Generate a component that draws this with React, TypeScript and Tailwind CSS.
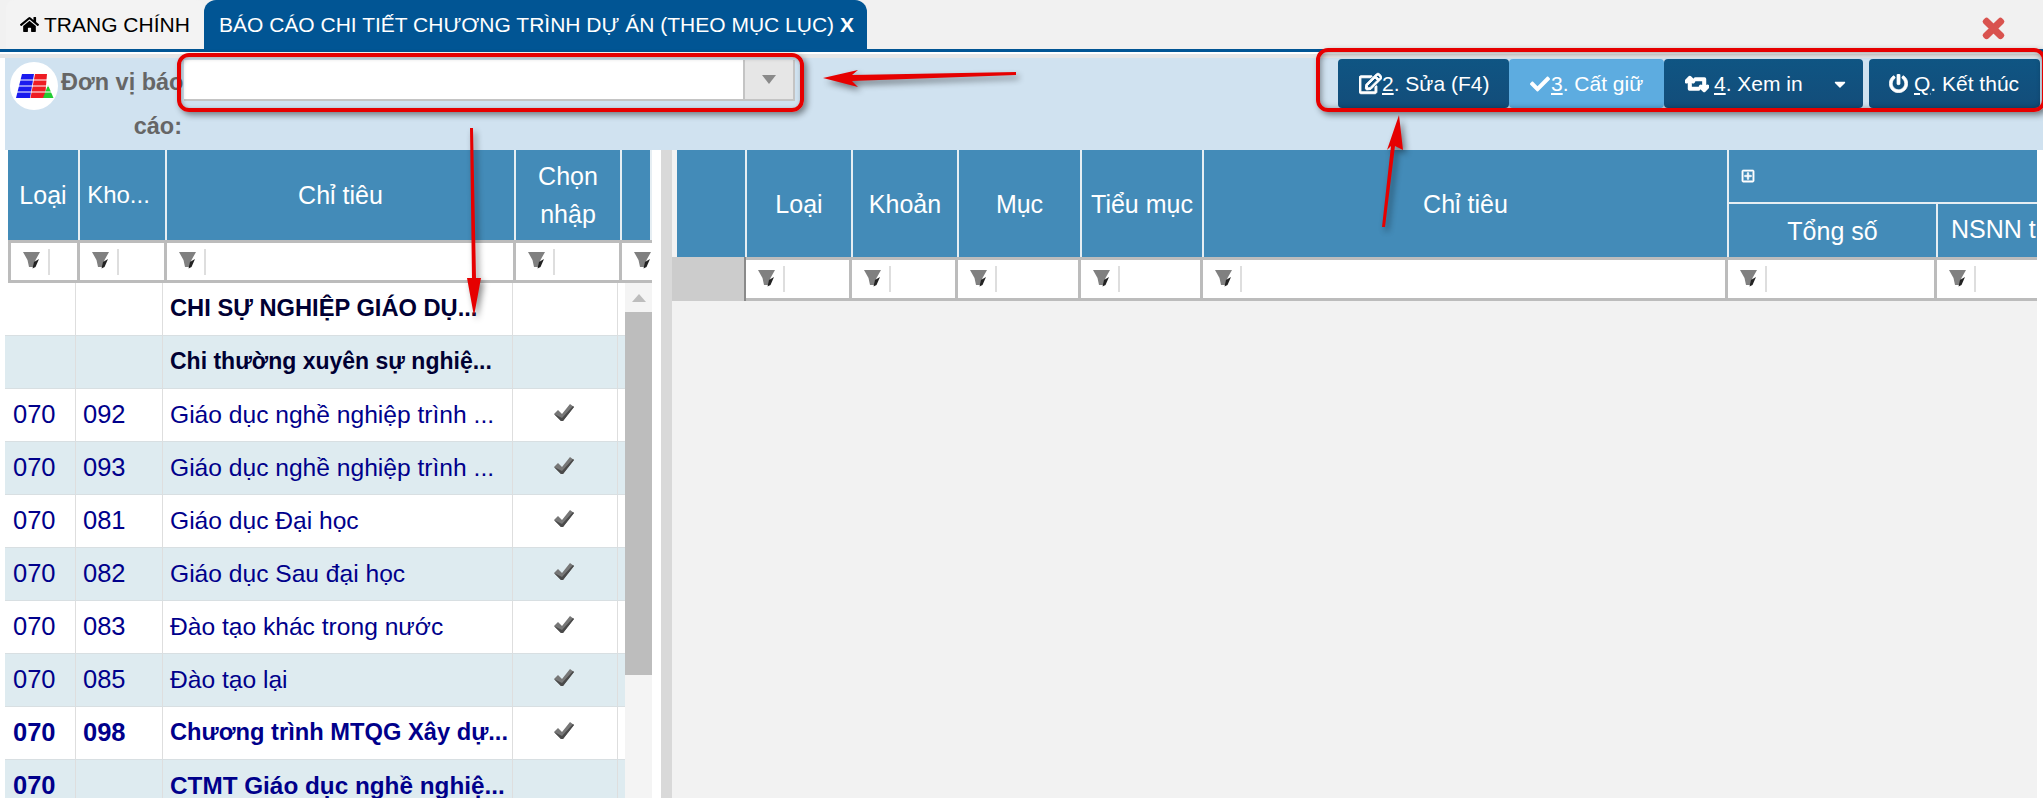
import React from "react";
import { FaHome, FaRegEdit, FaCheck, FaRetweet, FaPowerOff, FaTimes, FaRegPlusSquare, FaCaretDown } from "react-icons/fa";

function Funnel() {
  return (
    <svg width="17" height="18" viewBox="0 0 17 18" className="shrink-0 -mt-[3px]">
      <path d="M0 1 H17 L12.5 9 L11 16 H6 L4.5 9 Z" fill="#808080" />
      <path d="M11 11 L16 8 L12.5 16 L9.5 17.5 Z" fill="#222" />
    </svg>
  );
}

function FilterCell({ w, last }: { w: number; last?: boolean }) {
  return (
    <div style={{ width: w }} className={`h-full shrink-0 bg-white flex items-center pl-[12px] gap-[8px] ${last ? "" : "border-r-[3px] border-[#bcbcbc]"}`}>
      <Funnel />
      <div className="w-[2px] h-[26px] bg-[#dedede]" />
    </div>
  );
}

function Check() {
  return (
    <svg width="22" height="20" viewBox="0 0 22 20">
      <path d="M1 11 L5 7 L9 11 L17 1 L21 4 L10 18 L8 18 Z" fill="#777" />
      <path d="M1 11 L8 18 L10 18 L21 4 L20 3 L9 15 Z" fill="#4a4a4a" />
    </svg>
  );
}

function Logo() {
  return (
    <svg width="48" height="48" viewBox="0 0 48 48" className="shrink-0">
      <circle cx="24" cy="24" r="24" fill="#fff" />
      <path d="M12 12 H24 L20 36 H6 Z" fill="#1a1aee" />
      <path d="M25 12 H37 L35 36 H20.5 Z" fill="#ee1c24" />
      <path d="M38 23 L43.5 36 H33 Z" fill="#22cc33" />
      <path d="M4 18 H40 M4 24 H40 M4 30 H46" stroke="#fff" strokeWidth="1.2" />
    </svg>
  );
}

const rows = [
  { a: "", b: "", c: "CHI SỰ NGHIỆP GIÁO DỤ...", size: "text-[23.7px]", bold: true, dark: true, check: false },
  { a: "", b: "", c: "Chi thường xuyên sự nghiệ...", size: "text-[23px]", bold: true, dark: true, check: false },
  { a: "070", b: "092", c: "Giáo dục nghề nghiệp trình ...", size: "text-[24.6px]", check: true },
  { a: "070", b: "093", c: "Giáo dục nghề nghiệp trình ...", size: "text-[24.6px]", check: true },
  { a: "070", b: "081", c: "Giáo dục Đại học", size: "text-[24.6px]", check: true },
  { a: "070", b: "082", c: "Giáo dục Sau đại học", size: "text-[24.6px]", check: true },
  { a: "070", b: "083", c: "Đào tạo khác trong nước", size: "text-[24.6px]", check: true },
  { a: "070", b: "085", c: "Đào tạo lại", size: "text-[24.6px]", check: true },
  { a: "070", b: "098", c: "Chương trình MTQG Xây dự...", size: "text-[23.7px]", bold: true, check: true },
  { a: "070", b: "", c: "CTMT Giáo dục nghề nghiệ...", size: "text-[24.3px]", bold: true, check: false },
];

const headL = "flex items-center justify-center text-white text-[25px] leading-[38px] bg-[#438bb8] border-r-2 border-[#e6eef3] shrink-0 text-center overflow-hidden";

function Btn({ className, children }: { className: string; children: React.ReactNode }) {
  return (
    <div className={`h-[49px] flex items-center text-white text-[21px] rounded-[4px] ${className}`}>{children}</div>
  );
}

export default function App() {
  return (
    <div className="relative w-[2043px] h-[798px] overflow-hidden bg-[#f1f1f1] font-['Liberation_Sans',Arial,sans-serif]">
      {/* tabs */}
      <div className="flex h-[49px] pl-[6px] items-stretch">
        <div className="w-[198px] bg-[#f3f3f3] rounded-t-lg flex items-center pl-[14px] gap-[5px] text-[21px] text-black">
          <FaHome className="text-[19px]" />
          <span>TRANG CHÍNH</span>
        </div>
        <div className="w-[663px] bg-[#015594] rounded-t-xl flex items-center pl-[15px] text-[21px] text-white whitespace-nowrap">
          BÁO CÁO CHI TIẾT CHƯƠNG TRÌNH DỰ ÁN (THEO MỤC LỤC)<span className="ml-[6px] font-bold">X</span>
        </div>
        <div className="flex-1 flex items-center justify-end pr-[35px] pt-[7px]">
          <FaTimes className="text-[#d9534f] text-[29px] [stroke-width:30px]" />
        </div>
      </div>
      <div className="h-[3px] bg-[#015594]" />
      <div className="h-[2px] bg-white" />
      <div className="h-[4px] bg-[#e6e6e6]" />

      <div className="pl-[5px] bg-white">
        {/* toolbar */}
        <div className="h-[92px] bg-[#d0e2f0] flex items-start pl-[5px] pr-[3px]">
          <div className="mt-[4px]"><Logo /></div>
          <div className="w-[121px] ml-[3px] mt-[2px] text-right font-bold text-[23.5px] leading-[44px] text-[#666] whitespace-pre">
            {"Đơn vị báo\ncáo:"}
          </div>
          <div className="relative ml-[2px] mt-[2px] w-[611px] h-[41px] bg-white border-b-2 border-r-2 border-[#c4c4c4] flex justify-end">
            <div className="w-[50px] h-full bg-[#e6e6e6] border-l-2 border-[#c4c4c4] flex items-center justify-center">
              <div className="w-0 h-0 border-l-[7px] border-r-[7px] border-t-[9px] border-l-transparent border-r-transparent border-t-[#8a8a8a]" />
            </div>
          </div>
          <div className="ml-auto mt-[1px] flex items-start">
            <Btn className="w-[171px] bg-[linear-gradient(#0f5583,#134d7a)] pl-[21px]">
              <FaRegEdit className="text-[23px] mr-0 [stroke-width:25px]" />
              <span><u>2</u>. Sửa (F4)</span>
            </Btn>
            <Btn className="w-[155px] bg-[#5dace0] pl-[21px]">
              <FaCheck className="text-[20px]" />
              <span className="ml-[1px]"><u>3</u>. Cất giữ</span>
            </Btn>
            <Btn className="w-[199px] bg-[linear-gradient(#0f5583,#134d7a)] pl-[21px]">
              <FaRetweet className="text-[24px] [stroke-width:45px]" />
              <span className="ml-[5px]"><u>4</u>. Xem in</span>
              <FaCaretDown className="ml-auto mr-[14px] text-[18px]" />
            </Btn>
            <Btn className="w-[171px] ml-[6px] bg-[linear-gradient(#0f5583,#134d7a)] pl-[20px]">
              <FaPowerOff className="text-[19px] mr-[6px] [stroke-width:20px]" />
              <span><u>Q</u>. Kết thúc</span>
            </Btn>
          </div>
        </div>

        {/* panes */}
        <div className="flex h-[648px]">
          {/* left */}
          <div className="w-[647px] shrink-0 overflow-hidden bg-white">
            <div className="pl-[3px] flex h-[90px] pr-0">
              <div style={{ width: 72 }} className={headL}>Loại</div>
              <div style={{ width: 87 }} className={headL + " pr-[8px] !text-[24px]"}>Kho...</div>
              <div style={{ width: 349 }} className={headL}>Chỉ tiêu</div>
              <div style={{ width: 106 }} className={headL}>Chọn<br />nhập</div>
              <div style={{ width: 30 }} className={headL + " border-r-0"} />
            </div>
            <div className="ml-[3px] h-[43px] flex border-t-[3px] border-b-[3px] border-l-[3px] border-[#bcbcbc]">
              <FilterCell w={69} />
              <FilterCell w={87} />
              <FilterCell w={349} />
              <FilterCell w={106} />
              <FilterCell w={30} last />
            </div>
            <div className="flex">
              <div className="w-[620px] shrink-0">
                {rows.map((r, i) => (
                  <div key={i} className={`flex h-[53px] border-b border-[#d8dfe2] ${i % 2 ? "bg-[#deebf0]" : "bg-white"} ${r.bold ? "font-bold" : ""} ${r.dark ? "text-[#000033]" : "text-[#00008b]"}`}>
                    <div className="w-[71px] border-r border-[#dedede] pl-[8px] leading-[51px] text-[25.5px]">{r.a}</div>
                    <div className="w-[87px] border-r border-[#dedede] pl-[7px] leading-[51px] text-[25.5px]">{r.b}</div>
                    <div className={`w-[350px] border-r border-[#dedede] pl-[7px] leading-[51px] whitespace-nowrap overflow-hidden ${r.size}`}>{r.c}</div>
                    <div className="w-[105px] border-r border-[#dedede] flex justify-center pt-[14px] pr-[3px]">{r.check ? <Check /> : null}</div>
                  </div>
                ))}
              </div>
              <div className="w-[27px] ml-0 flex flex-col items-center bg-[#f4f4f4]">
                <div className="h-[29px] flex items-center justify-center">
                  <div className="w-0 h-0 border-l-[7px] border-r-[7px] border-b-[8px] border-l-transparent border-r-transparent border-b-[#bdbdbd]" />
                </div>
                <div className="w-full h-[363px] bg-[#bdbdbd]" />
              </div>
            </div>
          </div>

          {/* splitter */}
          <div className="w-[9px] shrink-0 bg-white" />
          <div className="w-[11px] shrink-0 bg-[#d9d9d9]" />

          {/* right */}
          <div className="w-[1365px] shrink-0 bg-[#f2f2f2] overflow-hidden flex flex-col">
            <div className="flex h-[107px] pl-[5px] bg-[#f2f2f2]">
              <div style={{ width: 70 }} className={headL} />
              <div style={{ width: 106 }} className={headL}>Loại</div>
              <div style={{ width: 106 }} className={headL}>Khoản</div>
              <div style={{ width: 123 }} className={headL}>Mục</div>
              <div style={{ width: 122 }} className={headL}>Tiểu mục</div>
              <div style={{ width: 525 }} className={headL}>Chỉ tiêu</div>
              <div className="w-[308px] shrink-0 flex flex-col bg-[#438bb8]">
                <div className="h-[54px] border-b-2 border-[#e6eef3] flex items-center pl-[12px] text-white text-[14px]">
                  <FaRegPlusSquare className="[stroke-width:20px]" />
                </div>
                <div className="flex flex-1">
                  <div style={{ width: 209 }} className={headL}>Tổng số</div>
                  <div className="w-[99px] shrink-0 text-white text-[25px] leading-[51px] pl-[13px] whitespace-nowrap overflow-hidden">NSNN trong nước</div>
                </div>
              </div>
            </div>
            <div className="flex h-[44px] border-b-[3px] border-t-[3px] border-[#bcbcbc] w-[1365px]">
              <div className="w-[74px] -mt-[3px] -mb-[3px] shrink-0 bg-[#cccccc] border-r-2 border-[#8a8a8a]" />
              <FilterCell w={106} />
              <FilterCell w={106} />
              <FilterCell w={123} />
              <FilterCell w={122} />
              <FilterCell w={525} />
              <FilterCell w={209} />
              <FilterCell w={100} last />
            </div>
          </div>
          <div className="flex-1 bg-white" />
        </div>
      </div>

      {/* annotations over the picture */}
      <div className="absolute left-[177px] top-[53px] w-[627px] h-[59px] border-[4px] border-[#e60000] rounded-[12px] shadow-[3px_3px_6px_rgba(0,0,0,0.45),inset_1px_1px_4px_rgba(0,0,0,0.3)]" />
      <div className="absolute left-[1316px] top-[48px] w-[730px] h-[64px] border-[4px] border-[#e60000] rounded-[12px] shadow-[3px_3px_6px_rgba(0,0,0,0.45),inset_1px_1px_6px_rgba(0,0,0,0.45)]" />
      <svg width="2043" height="798" className="absolute left-0 top-0 pointer-events-none drop-shadow-[3px_4px_3px_rgba(0,0,0,0.45)]">
        <path d="M823 78 L858 70 L852 75 L1016 72 L1016 75 L852 81 L858 87 Z" fill="#e60000" />
        <path d="M470 128 L473 128 L476 278 L481 278 L474 316 L467 278 L472 278 Z" fill="#e60000" />
        <path d="M1399 115 L1403 150 L1395 146 L1385 227 L1382 227 L1391 146 L1387 150 Z" fill="#e60000" />
      </svg>
    </div>
  );
}
